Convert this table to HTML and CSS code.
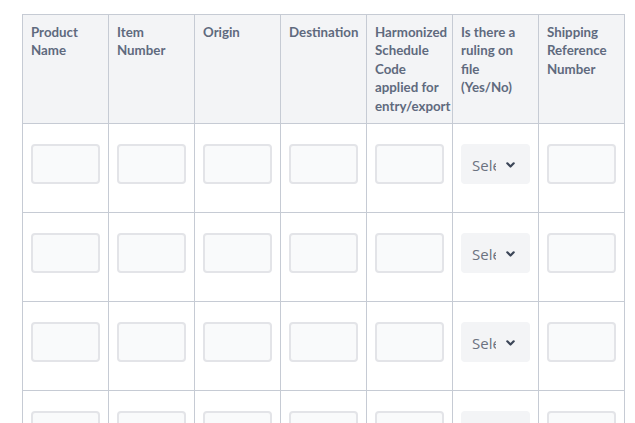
FILE: index.html
```html
<!DOCTYPE html>
<html>
<head>
<meta charset="utf-8">
<link rel="stylesheet" href="styles.css">
</head>
<body>
<div class="wrap">
<table class="grid">
<thead>
<tr>
<th>Product Name</th>
<th>Item Number</th>
<th>Origin</th>
<th>Destination</th>
<th>Harmonized Schedule Code applied for <span class="nw">entry/export</span></th>
<th>Is there a ruling on file (Yes/No)</th>
<th>Shipping Reference Number</th>
</tr>
</thead>
<tbody>
<tr>
<td><input class="field" type="text"></td>
<td><input class="field" type="text"></td>
<td><input class="field" type="text"></td>
<td><input class="field" type="text"></td>
<td><input class="field" type="text"></td>
<td><div class="sel"><span class="sel-text">Select</span><svg class="chev" width="9" height="6" viewBox="0 0 9 6"><path d="M1.3 1.3 L4.5 4.5 L7.7 1.3" fill="none" stroke="#3b4557" stroke-width="2.2" stroke-linecap="round" stroke-linejoin="round"/></svg></div></td>
<td><input class="field" type="text"></td>
</tr>
<tr>
<td><input class="field" type="text"></td>
<td><input class="field" type="text"></td>
<td><input class="field" type="text"></td>
<td><input class="field" type="text"></td>
<td><input class="field" type="text"></td>
<td><div class="sel"><span class="sel-text">Select</span><svg class="chev" width="9" height="6" viewBox="0 0 9 6"><path d="M1.3 1.3 L4.5 4.5 L7.7 1.3" fill="none" stroke="#3b4557" stroke-width="2.2" stroke-linecap="round" stroke-linejoin="round"/></svg></div></td>
<td><input class="field" type="text"></td>
</tr>
<tr>
<td><input class="field" type="text"></td>
<td><input class="field" type="text"></td>
<td><input class="field" type="text"></td>
<td><input class="field" type="text"></td>
<td><input class="field" type="text"></td>
<td><div class="sel"><span class="sel-text">Select</span><svg class="chev" width="9" height="6" viewBox="0 0 9 6"><path d="M1.3 1.3 L4.5 4.5 L7.7 1.3" fill="none" stroke="#3b4557" stroke-width="2.2" stroke-linecap="round" stroke-linejoin="round"/></svg></div></td>
<td><input class="field" type="text"></td>
</tr>
<tr>
<td><input class="field" type="text"></td>
<td><input class="field" type="text"></td>
<td><input class="field" type="text"></td>
<td><input class="field" type="text"></td>
<td><input class="field" type="text"></td>
<td><div class="sel"><span class="sel-text">Select</span><svg class="chev" width="9" height="6" viewBox="0 0 9 6"><path d="M1.3 1.3 L4.5 4.5 L7.7 1.3" fill="none" stroke="#3b4557" stroke-width="2.2" stroke-linecap="round" stroke-linejoin="round"/></svg></div></td>
<td><input class="field" type="text"></td>
</tr>
</tbody>
</table>
</div>
</body>
</html>
```
FILE: styles.css
```css
html, body {
  margin: 0;
  padding: 0;
  background: #ffffff;
  overflow: hidden;
}
body {
  font-family: "Lato", "Open Sans", sans-serif;
}
.wrap {
  padding: 14px 0 0 22px;
}
.grid {
  border-collapse: collapse;
  table-layout: fixed;
  width: 603px;
}
.grid th,
.grid td {
  border: 1px solid #c6cbd4;
  width: 86px;
  box-sizing: border-box;
}
.grid th {
  background: #f3f4f6;
  color: #5f6a7e;
  font-size: 13.3px;
  font-weight: 700;
  line-height: 18.4px;
  text-align: left;
  vertical-align: top;
  padding: 8px;
  height: 109px;
  white-space: normal;
  overflow: visible;
}
.nw {
  white-space: nowrap;
}
.grid td {
  padding: 20px 8px 28px 8px;
  vertical-align: top;
  height: 89px;
}
.field {
  display: block;
  box-sizing: border-box;
  width: 69px;
  height: 40px;
  margin: 0;
  border: 2px solid #e3e4e8;
  border-radius: 4px;
  background: #f9fafb;
  outline: none;
}
.sel {
  box-sizing: border-box;
  width: 69px;
  height: 40px;
  border-radius: 4px;
  background: #f3f4f6;
  display: flex;
  align-items: center;
  padding-left: 11px;
  font-family: "Open Sans", sans-serif;
}
.sel-text {
  display: block;
  width: 24px;
  overflow: hidden;
  white-space: nowrap;
  font-size: 15px;
  color: #6b7280;
  line-height: 20px;
  margin-top: 2px;
}
.chev {
  margin-left: 10px;
  margin-top: 1px;
  display: block;
}
```
